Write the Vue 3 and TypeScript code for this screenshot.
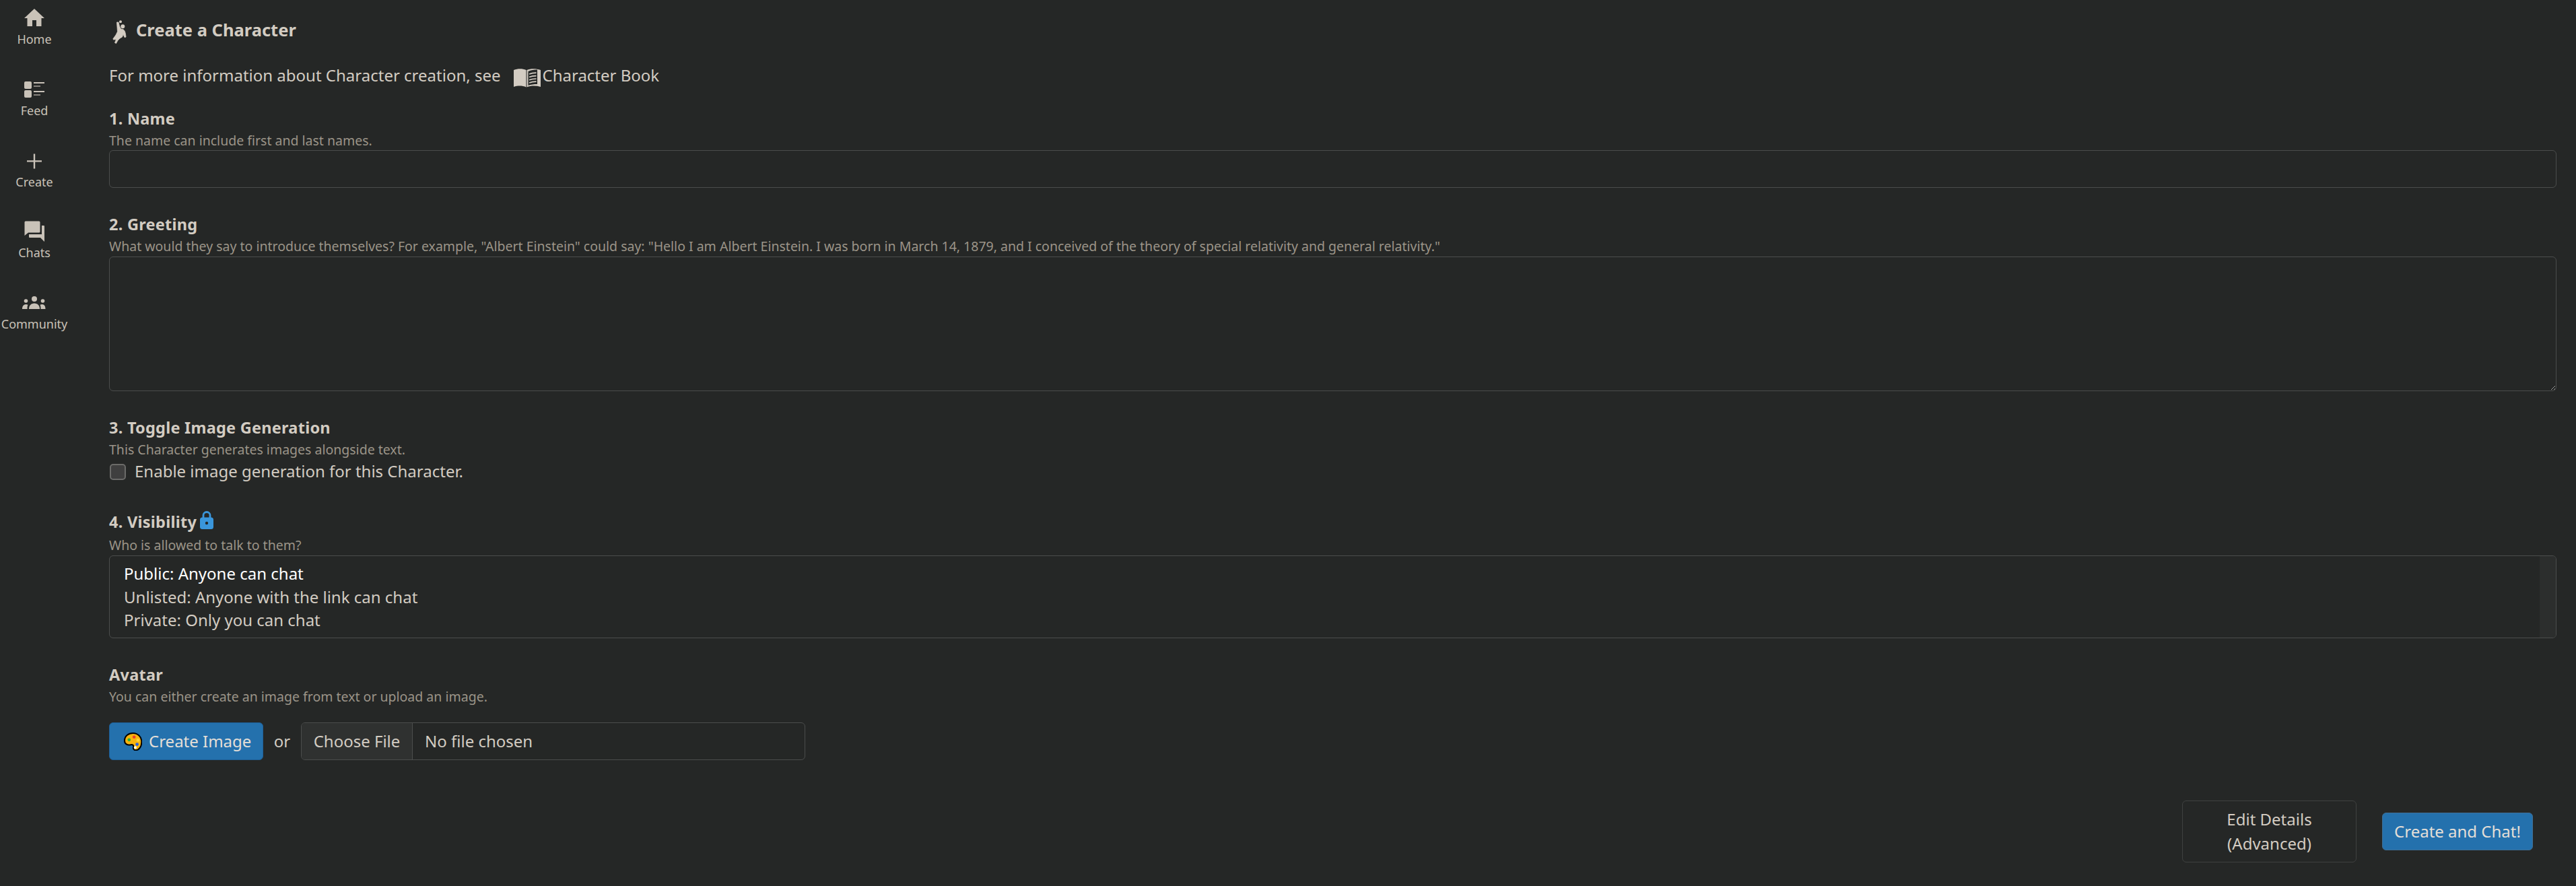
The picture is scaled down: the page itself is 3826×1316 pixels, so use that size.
<script setup lang="ts">
const navItems: { label: string; icon: string }[] = [
  { label: 'Home', icon: 'home' },
  { label: 'Feed', icon: 'feed' },
  { label: 'Create', icon: 'create' },
  { label: 'Chats', icon: 'chats' },
  { label: 'Community', icon: 'community' },
]
</script>

<template>
  <div class="page">
    <nav class="side">
      <a v-for="item in navItems" :key="item.label" class="nav-item">
        <svg class="nav-icon" viewBox="0 0 32 32" aria-hidden="true">
          <path v-if="item.icon === 'home'" fill="currentColor" d="M16 3 1 17h4.500v12h7.500v-9h6v9h7.500V17H31Z" />
          <g v-else-if="item.icon === 'feed'" fill="currentColor">
            <rect x="1" y="5" width="11" height="11" rx="2" />
            <rect x="1" y="18" width="11" height="11" rx="2" />
            <rect x="15" y="6" width="16" height="2" />
            <rect x="15" y="11" width="10" height="2" opacity=".6" />
            <rect x="15" y="19" width="16" height="2" />
            <rect x="15" y="24" width="10" height="2" opacity=".6" />
          </g>
          <path v-else-if="item.icon === 'create'" fill="currentColor" d="M14.800 6.400h2.400v9.800H27v2.400h-9.800v9.800h-2.400v-9.800H5v-2.400h9.800Z" />
          <path v-else-if="item.icon === 'chats'" fill="currentColor" d="M1.500 3a1.500 1.500 0 0 1 1.500-1.500h20a1.500 1.500 0 0 1 1.500 1.500v14a1.500 1.500 0 0 1-1.500 1.500H7l-5.500 4.500Zm25.500 5h3a1 1 0 0 1 1 1v23l-6-6H9a1 1 0 0 1-1-1v-4h19Z" />
          <g v-else fill="currentColor">
            <circle cx="16" cy="11" r="4" />
            <path d="M8 26c0-5 3-8.500 8-8.500s8 3.500 8 8.500Z" />
            <circle cx="3.500" cy="14" r="2.800" />
            <circle cx="28.500" cy="14" r="2.800" />
            <path d="M-2 26c0-4 2-7 5.500-7 1 0 2 .2 3 .8C5.500 21.500 5.500 24 5.500 26Zm34.500 0h-7c0-2 0-4.500-1-6.200 1-.6 2-.8 3-.8 3.500 0 5 3 5 7Z" />
          </g>
        </svg>
        <span>{{ item.label }}</span>
      </a>
    </nav>

    <main class="main">
      <h1 class="title">
        <svg class="runner" viewBox="0 0 40 45" aria-hidden="true">
          <circle cx="19" cy="7.300" r="2" fill="currentColor" />
          <circle cx="22.300" cy="14.300" r="3" fill="currentColor" />
          <path fill="currentColor" stroke="currentColor" stroke-width=".8" stroke-linejoin="round" d="M13.500 8 16 8l1.500 6 2 4 3 .5c2.500 1 4 4.500 4.500 11.500l-2 .5-2-4.500-1.500 4-3.500 2-3 3-2.500 4.500-2-1 2-5-4 .5-.5-1.500 4-5.500 2.500-5Z" />
        </svg>
        <span class="title-text">Create a Character</span>
      </h1>

      <p class="intro">
        <span>For more information about Character creation, see</span>
        <a class="book-link">
          <svg class="book" viewBox="0 0 40 30" aria-hidden="true">
            <path fill="currentColor" d="M0 4C6 1.500 13 1.500 18.500 4v25.500C13 27 6 27 0 29Zm19.500 0C25 1.500 33 1.500 40 4v25c-7-2-14.500-2-20.500.5Z" />
            <path fill="#252726" d="M21.500 6c4-2 9-2.500 13.500-2.500V25c-5 0-9.500.5-13.500 2Z" />
            <path fill="none" stroke="#d3ccc2" stroke-width="1.700" d="M23 10c3-1.300 6.500-1.800 10.500-1.800M23 14.500c3-1.300 6.500-1.800 10.500-1.800M23 18.800c3-1.300 6.500-1.800 10.500-1.800M23 23c3-1.300 6.500-1.800 10.500-1.800" />
          </svg>
          <span>Character Book</span>
        </a>
      </p>

      <section class="field field-name">
        <h2 class="label">1. Name</h2>
        <div class="hint hint-spaced">The name can include first and last names.</div>
        <input class="control text-input" type="text" />
      </section>

      <section class="field field-greeting">
        <h2 class="label">2. Greeting</h2>
        <div class="hint hint-spaced hint-greeting">What would they say to introduce themselves? For example, "Albert Einstein" could say: "Hello I am Albert Einstein. I was born in March 14, 1879, and I conceived of the theory of special relativity and general relativity."</div>
        <textarea class="control text-area"></textarea>
      </section>

      <section class="field field-toggle">
        <h2 class="label">3. Toggle Image Generation</h2>
        <div class="hint hint-spaced">This Character generates images alongside text.</div>
        <label class="check-row">
          <input class="check" type="checkbox" />
          <span>Enable image generation for this Character.</span>
        </label>
      </section>

      <section class="field field-visibility">
        <h2 class="label label-lock">
          <span>4. Visibility</span>
          <svg class="lock" viewBox="0 0 20 27" aria-hidden="true">
            <path fill="none" stroke="currentColor" stroke-width="2.800" d="M5 12V6.500a5 5 0 0 1 10 0V12" />
            <rect x="0" y="9.500" width="20" height="17.500" rx="3.500" fill="currentColor" />
            <circle cx="10" cy="18" r="2.200" fill="#252726" />
          </svg>
        </h2>
        <div class="hint hint-vis">Who is allowed to talk to them?</div>
        <div class="listbox">
          <div class="options">
            <div class="option option-selected">Public: Anyone can chat</div>
            <div class="option">Unlisted: Anyone with the link can chat</div>
            <div class="option">Private: Only you can chat</div>
          </div>
          <div class="track"></div>
        </div>
      </section>

      <section class="field field-avatar">
        <h2 class="label">Avatar</h2>
        <div class="hint hint-spaced">You can either create an image from text or upload an image.</div>
        <div class="avatar-row">
          <button class="btn btn-primary btn-image" type="button">
            <svg class="palette" viewBox="0 0 80 80" aria-hidden="true">
              <path fill="#f9b40d" stroke="#000" stroke-width="6" d="M40 3c20 0 38 15 38 39 0 20-12 36-26 36-8 0-12-6-10-14 2-8-4-12-12-10C16 58 3 50 3 36 3 16 20 3 40 3Z" />
              <circle cx="23" cy="32" r="7" fill="#2fae3b" />
              <circle cx="45" cy="20" r="7" fill="#e8412c" />
              <circle cx="62" cy="34" r="7" fill="#ffd23a" />
              <circle cx="58" cy="52" r="7" fill="#2a5fe0" />
              <circle cx="50" cy="66" r="6" fill="#ffffff" />
            </svg>
            <span>Create Image</span>
          </button>
          <span class="or">or</span>
          <div class="file">
            <span class="file-btn">Choose File</span>
            <span class="file-name">No file chosen</span>
          </div>
        </div>
      </section>

      <footer class="actions">
        <button class="btn btn-outline" type="button">Edit Details<br />(Advanced)</button>
        <button class="btn btn-primary btn-chat" type="button">Create and Chat!</button>
      </footer>
    </main>
  </div>
</template>

<style>
html, body { margin: 0; background: #252726; }
</style>

<style scoped>
* { box-sizing: border-box; }
.page {
  display: flex;
  width: 3826px;
  height: 1316px;
  overflow: hidden;
  background: #252726;
  color: #d3ccc2;
  font-family: "Noto Sans", "Open Sans", sans-serif;
  font-size: 24px;
  line-height: 1.5;
}
.side {
  width: 102px;
  flex: none;
  display: flex;
  flex-direction: column;
  align-items: center;
  padding-top: 10px;
}
.nav-item {
  display: flex;
  flex-direction: column;
  align-items: center;
  height: 105.800px;
  color: #c9c2b8;
  font-size: 18px;
  line-height: 26px;
}
.nav-icon { width: 32px; height: 32px; margin-bottom: 3px; overflow: visible; }
.main {
  flex: 1;
  min-width: 0;
  padding: 0 29px 0 60px;
  display: flex;
  flex-direction: column;
}
.title {
  display: flex;
  align-items: center;
  margin: 0;
  height: 88px;
  font-size: 25.500px;
  font-weight: 700;
}
.title-text { padding-top: 1px; }
.runner { flex: none; width: 40px; height: 45px; margin: 6px 2px 0 -2px; }
.intro {
  display: flex;
  align-items: center;
  margin: 0 0 2px;
  height: 48px;
}
.book-link { display: flex; align-items: center; margin-left: 20px; }
.book { width: 40px; height: 30px; margin-right: 2px; margin-top: 6px; color: #d3ccc2; }
.label { margin: 0; font-size: 23.500px; letter-spacing: .25px; font-weight: 700; line-height: 36px; }
.hint { font-size: 19.500px; line-height: 28px; color: #9b9488; }
.hint-spaced { margin-top: 1px; }
.hint-greeting { margin-bottom: 1px; }
.hint-vis { margin-top: 3px; margin-bottom: 1px; }
.control {
  display: block;
  width: 100%;
  background: transparent;
  border: 1px solid #4b4d4c;
  border-radius: 6px;
  color: inherit;
  font: inherit;
  outline: none;
}
.field-name { margin-top: 20px; }
.text-input { height: 56px; }
.field-greeting { margin-top: 36px; }
.text-area { height: 200px; resize: vertical; color-scheme: dark; }
.field-toggle { margin-top: 36px; }
.check-row { display: flex; align-items: center; height: 36px; }
.check {
  appearance: none;
  flex: none;
  width: 24px;
  height: 24px;
  margin: 2px 13px 0 1px;
  background: #3f3f3f;
  border: 2px solid #6b6b69;
  border-radius: 5px;
}
.field-visibility { margin-top: 39px; }
.label-lock { display: flex; align-items: center; }
.lock { flex: none; width: 20px; height: 27px; color: #3a96db; margin-left: 5px; margin-top: -5px; }
.listbox {
  display: flex;
  height: 123px;
  border: 1px solid #4b4d4c;
  border-radius: 6px;
  overflow: hidden;
}
.options { flex: 1; padding: 9px 21px; }
.option { line-height: 34.500px; }
.option-selected { color: #ffffff; }
.track { width: 24px; background: #2c2e2d; }
.field-avatar { margin-top: 36px; }
.avatar-row { display: flex; align-items: center; margin-top: 24px; }
.btn {
  font: inherit;
  border-radius: 6px;
  color: inherit;
  background: transparent;
  padding: 0;
}
.btn-primary { background: #2471ad; border: 1px solid #1f5f97; color: #e4dfd7; }
.btn-image {
  display: flex;
  align-items: center;
  width: 229px;
  height: 56px;
  padding-left: 21px;
  gap: 10px;
}
.palette { flex: none; width: 27px; height: 27px; }
.or { width: 56px; text-align: center; }
.file {
  display: flex;
  width: 749px;
  height: 56px;
  border: 1px solid #4b4d4c;
  border-radius: 6px;
  overflow: hidden;
}
.file-btn {
  display: flex;
  align-items: center;
  justify-content: center;
  width: 165px;
  background: #2f3130;
  border-right: 1px solid #4b4d4c;
}
.file-name { display: flex; align-items: center; padding-left: 18px; }
.actions {
  display: flex;
  justify-content: flex-end;
  align-items: center;
  gap: 38px;
  margin-top: 60px;
  padding-right: 35px;
}
.btn-outline {
  width: 259px;
  height: 92px;
  border: 1px solid #3f4140;
}
.btn-chat { width: 224px; height: 56px; border-color: #3f6f96; }
</style>
